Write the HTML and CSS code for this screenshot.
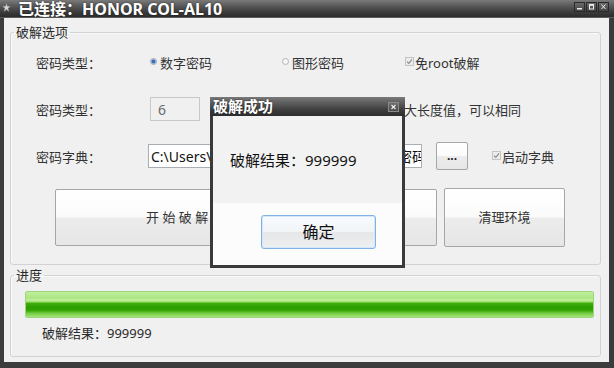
FILE: index.html
```html
<!DOCTYPE html>
<html lang="zh-CN">
<head>
<meta charset="utf-8">
<title>已连接：HONOR COL-AL10</title>
<link rel="stylesheet" href="styles.css">
</head>
<body>
<div class="window">
  <div class="titlebar">
    <svg class="app-icon" width="9" height="9" viewBox="0 0 9 9"><path d="M4.5 0.5 L5.4 3.2 L8.5 3.4 L6 5.3 L7 8.4 L4.5 6.6 L2 8.4 L3 5.3 L0.5 3.4 L3.6 3.2 Z" fill="#d8d8d8" stroke="#888" stroke-width="0.5"/></svg>
    <span class="title">已连接：HONOR COL-AL10</span>
    <div class="controls">
      <span class="ctl"><svg width="9" height="8" viewBox="0 0 9 8"><rect x="2" y="5" width="5" height="1.5" fill="#eee"/></svg></span>
      <span class="ctl"><svg width="9" height="8" viewBox="0 0 9 8"><rect x="2.5" y="1.5" width="4" height="4.5" fill="none" stroke="#eee" stroke-width="1"/><rect x="2.5" y="1.5" width="4" height="1.3" fill="#eee"/></svg></span>
      <span class="ctl"><svg width="9" height="8" viewBox="0 0 9 8"><path d="M2.5 1.5 L6.5 6 M6.5 1.5 L2.5 6" stroke="#eee" stroke-width="1"/></svg></span>
    </div>
  </div>
  <div class="frame">
    <fieldset class="group group-options">
      <legend>破解选项</legend>
      <div class="group-body options-body">
        <div class="row row-type">
          <span class="label">密码类型：</span>
          <span class="opt opt-num"><span class="radio checked"></span>数字密码</span>
          <span class="opt opt-shape"><span class="radio"></span>图形密码</span>
          <span class="opt"><svg class="check" width="9" height="9" viewBox="0 0 9 9"><rect x="0.5" y="0.5" width="8" height="8" fill="#ececec" stroke="#c4c4c4"/><path d="M2 4.6 L3.8 6.4 L7 2.4" fill="none" stroke="#8a8a8a" stroke-width="1.1"/></svg>免root破解</span>
        </div>
        <div class="row row-len">
          <span class="label">密码类型：</span>
          <input class="input input-len" type="text" value="6" disabled>
          <span class="hint">最大长度值，可以相同</span>
        </div>
        <div class="row row-dict">
          <span class="label label-dict">密码字典：</span>
          <input class="input input-path" type="text" value="C:\Users\test\Desktop\HonorCracker\密码字典.txt" readonly>
          <button class="btn btn-browse">...</button>
          <span class="opt opt-dict"><svg class="check" width="9" height="9" viewBox="0 0 9 9"><rect x="0.5" y="0.5" width="8" height="8" fill="#ececec" stroke="#c4c4c4"/><path d="M2 4.6 L3.8 6.4 L7 2.4" fill="none" stroke="#8a8a8a" stroke-width="1.1"/></svg>启动字典</span>
        </div>
        <div class="row actions">
          <button class="btn big start">开 始 破 解</button>
          <button class="btn big clean">清理环境</button>
        </div>
      </div>
    </fieldset>
    <fieldset class="group group-progress">
      <legend>进度</legend>
      <div class="group-body progress-body">
        <div class="progress"><div class="bar" style="width:100%"></div></div>
        <div class="result">破解结果：999999</div>
      </div>
    </fieldset>
  </div>

  <div class="dialog">
    <div class="dialog-title">
      <span class="dialog-caption">破解成功</span>
      <span class="dialog-close"><svg width="7" height="6" viewBox="0 0 7 6"><path d="M1.5 1 L5.5 5 M5.5 1 L1.5 5" stroke="#f2f2f2" stroke-width="1.1"/></svg></span>
    </div>
    <div class="dialog-body">
      <div class="dialog-msg">破解结果：999999</div>
      <div class="dialog-actions">
        <button class="btn ok">确定</button>
      </div>
    </div>
  </div>
</div>
</body>
</html>
```

FILE: styles.css
```css
* { box-sizing: border-box; }

html, body {
  margin: 0;
  padding: 0;
  width: 614px;
  height: 368px;
  overflow: hidden;
}

body {
  font-family: "Noto Sans", "Noto Sans CJK SC", sans-serif;
  background: #3a3a3a;
  color: #2a2a2a;
}

.window {
  position: relative;
  width: 614px;
  height: 368px;
  display: flex;
  flex-direction: column;
}

/* ---------- main title bar ---------- */
.titlebar {
  height: 18px;
  flex: none;
  display: flex;
  align-items: center;
  background: linear-gradient(to bottom, #7a7a7a 0%, #575757 35%, #3a3a3a 70%, #2c2c2c 94%, #5c5c5c 94%);
}

.app-icon {
  margin-left: 2px;
  margin-top: -4px;
  flex: none;
}

.title {
  margin-left: 7px;
  font-size: 16px;
  font-weight: 700;
  color: #ffffff;
  line-height: 18px;
  text-shadow: 0 0 2px rgba(0, 0, 0, 0.6);
  white-space: nowrap;
}

.controls {
  margin-left: auto;
  margin-right: 5px;
  margin-top: -4px;
  display: flex;
  gap: 1px;
}

.ctl {
  width: 11px;
  height: 10px;
  display: flex;
  align-items: center;
  justify-content: center;
  background: linear-gradient(#6a6a6a, #444);
  border: 1px solid #2a2a2a;
}

/* ---------- frame ---------- */
.frame {
  flex: 1;
  background: #f0f0f0;
  border-left: 4px solid #3c3c3c;
  border-right: 5px solid #3c3c3c;
  border-bottom: 6px solid #3c3c3c;
  padding: 7px 0 0 6px;
}

.group {
  margin: 0;
  padding: 0;
  width: 591px;
  min-width: 0;
  border: 1px solid #d2d2d2;
  border-radius: 3px;
  box-shadow: inset 1px 1px 0 #fafafa;
}

.group legend {
  font-size: 13px;
  line-height: 14px;
  padding: 0 2px;
  margin-left: 3px;
  color: #2a2a2a;
}

.group-progress {
  margin-top: 3px;
}

.options-body {
  padding: 11px 0 17px 25px;
  display: flex;
  flex-direction: column;
}

.row {
  display: flex;
  align-items: center;
  font-size: 13px;
  color: #333;
  white-space: nowrap;
}

.row-type { height: 24px; }
.row-len { height: 24px; margin-top: 23px; }
.row-dict { height: 28px; margin-top: 21px; }
.actions { height: 59px; margin-top: 18px; padding-left: 19px; }

.label {
  width: 114px;
  flex: none;
  color: #333;
}

.label-dict { width: 112px; }

.opt {
  display: flex;
  align-items: center;
  flex: none;
}

.opt-num { width: 132px; }
.opt-shape { width: 123px; }

.radio {
  width: 7px;
  height: 7px;
  border-radius: 50%;
  border: 1px solid #b5b5b5;
  background: #f4f4f4;
  margin-right: 3px;
  margin-top: -1px;
}

.radio.checked {
  background: radial-gradient(circle, #3d6fb4 0 1.6px, #9fb9dc 2.2px, #eef2f8 3px);
  border-color: #9aa7b8;
}

.check {
  margin-right: 1px;
  margin-top: -2px;
  flex: none;
}

.input {
  height: 24px;
  margin: 0;
  font-family: "Noto Sans", "Noto Sans CJK SC", sans-serif;
  font-size: 14px;
  outline: none;
  flex: none;
  border-radius: 0;
}

.input-len {
  width: 50px;
  background: #f0f0f0;
  border: 1px solid #c9c9c9;
  color: #6a6a6a;
  padding: 0 0 0 7px;
  -webkit-text-fill-color: #6a6a6a;
  opacity: 1;
}

.hint {
  margin-left: 191px;
  color: #333;
}

.input-path {
  width: 274px;
  background: #ffffff;
  border: 1px solid #a9adb4;
  color: #111;
  padding: 0 0 0 2px;
}

.btn {
  font-family: "Noto Sans", "Noto Sans CJK SC", sans-serif;
  border: 1px solid #a6a6a6;
  border-radius: 2px;
  background: linear-gradient(to bottom, #ffffff 0%, #fbfbfb 48%, #ececec 52%, #e6e6e6 100%);
  color: #333;
  padding: 0;
  cursor: default;
  flex: none;
}

.btn-browse {
  width: 32px;
  height: 28px;
  margin-left: 14px;
  font-size: 12px;
  font-weight: 700;
  line-height: 20px;
  color: #222;
}

.opt-dict { margin-left: 24px; }

.big {
  font-size: 13px;
  color: #333;
}

.start {
  width: 382px;
  height: 57px;
  text-align: left;
  padding-left: 90px;
  padding-bottom: 3px;
}

.clean {
  width: 121px;
  height: 59px;
  margin-left: 7px;
  padding-bottom: 2px;
}

/* ---------- progress ---------- */
.progress-body {
  padding: 9px 0 15px 14px;
}

.progress {
  width: 569px;
  height: 27px;
  border: 1px solid #9fd37c;
  border-radius: 2px;
  background: #e6e6e6;
  overflow: hidden;
}

.bar {
  height: 100%;
  background: linear-gradient(to bottom,
    #bff09a 0%, #aee686 22%, #bdee98 34%, #90d860 40%,
    #3cae0c 46%, #2c9d00 62%, #36a606 74%, #6fca40 84%, #a6e37c 100%);
}

.result {
  margin-top: 7px;
  padding-left: 17px;
  height: 16px;
  line-height: 16px;
  font-size: 13px;
  color: #2a2a2a;
}

/* ---------- dialog ---------- */
.dialog {
  position: absolute;
  left: 210px;
  top: 97px;
  width: 195px;
  height: 171px;
  display: flex;
  flex-direction: column;
}

.dialog-title {
  height: 19px;
  flex: none;
  display: flex;
  align-items: center;
  padding: 0 6px 0 3px;
  background: linear-gradient(to bottom, #7a7a7a 0%, #5a5a5a 35%, #3c3c3c 70%, #2e2e2e 100%);
}

.dialog-caption {
  font-size: 15px;
  font-weight: 700;
  color: #fff;
  line-height: 19px;
  text-shadow: 0 0 2px rgba(0, 0, 0, 0.6);
}

.dialog-close {
  margin-left: auto;
  width: 11px;
  height: 10px;
  display: flex;
  align-items: center;
  justify-content: center;
  background: linear-gradient(#6e6e6e, #4a4a4a);
  border: 1px solid #8a8a8a;
}

.dialog-body {
  flex: 1;
  display: flex;
  flex-direction: column;
  border: 3px solid #3a3a3a;
  border-top: 0;
}

.dialog-msg {
  height: 87px;
  flex: none;
  background: #f2f2f2;
  padding: 35px 0 0 17px;
  font-size: 15px;
  line-height: 18px;
  color: #111;
}

.dialog-actions {
  flex: 1;
  background: #fcfcfc;
  padding: 12px 0 0 48px;
}

.ok {
  width: 115px;
  height: 34px;
  font-size: 16px;
  color: #111;
  border: 1px solid #7fb2e2;
  border-radius: 3px;
  background: linear-gradient(to bottom, #f7fbff 0%, #f2f4f6 48%, #e4e6e8 52%, #eef0f2 100%);
  box-shadow: inset 0 0 0 1px #d6e8f8;
  padding-bottom: 2px;
}
```
